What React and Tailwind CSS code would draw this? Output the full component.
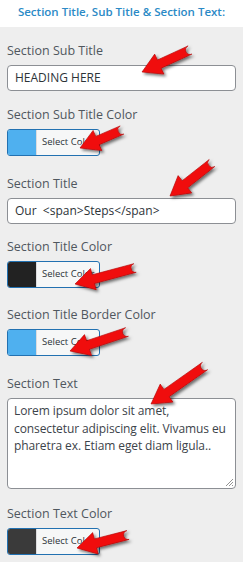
const font = { fontFamily: '"Open Sans", "Noto Sans", sans-serif' }

function Label({ children }) {
    return <div className="text-[12.5px] leading-[18px] text-[#50575e] mb-[5px]">{children}</div>
}

function TextField({ value }) {
    return (
        <div className="h-[26px] w-full rounded-[4px] border border-[#8c8f94] bg-white px-[7px] flex items-center text-[12px] text-[#2c3338] whitespace-pre">
            {value}
        </div>
    )
}

function ColorButton({ color }) {
    return (
        <div className="h-[27px] w-[93px] rounded-[3px] border border-[#2271b1] bg-[#f6f7f7] flex overflow-hidden">
            <div className="w-[28px] h-full" style={{ backgroundColor: color }} />
            <div className="flex items-center pl-[5px] text-[9.5px] text-[#2c3338] border-l border-[#dcdcde]">Select Color</div>
        </div>
    )
}

// arrows: [tailX, tailY, tipX, tipY]
const arrows = [
    [190, 50, 142, 72],
    [122, 130, 80, 148],
    [212, 163, 170, 196],
    [135, 268, 75, 284],
    [127, 332, 70, 351],
    [205, 366, 151, 404],
    [128, 535, 77, 548],
]

function arrowPath([x1, y1, x2, y2]) {
    const dx = x2 - x1
    const dy = y2 - y1
    const len = Math.hypot(dx, dy)
    const ux = dx / len
    const uy = dy / len
    const nx = -uy
    const ny = ux
    const headLen = 19
    const headW = 11
    const shaftW = 4.5
    const bx = x2 - ux * headLen
    const by = y2 - uy * headLen
    const p = (x, y) => `${x.toFixed(1)},${y.toFixed(1)}`
    return [
        `M${p(x1 + nx * shaftW, y1 + ny * shaftW)}`,
        `L${p(bx + nx * shaftW, by + ny * shaftW)}`,
        `L${p(bx + nx * headW, by + ny * headW)}`,
        `L${p(x2, y2)}`,
        `L${p(bx - nx * headW, by - ny * headW)}`,
        `L${p(bx - nx * shaftW, by - ny * shaftW)}`,
        `L${p(x1 - nx * shaftW, y1 - ny * shaftW)}`,
        `A${shaftW},${shaftW} 0 0 1 ${p(x1 + nx * shaftW, y1 + ny * shaftW)}`,
        'Z',
    ].join(' ')
}

export default function App() {
    return (
        <div className="relative w-[243px] h-[562px] bg-[#eeeeee] overflow-hidden" style={font}>
            {/* Header */}
            <div className="h-[27px] bg-white flex items-center justify-center">
                <span className="text-[11.5px] font-semibold text-[#2b8ac6] leading-none -mt-[3px]">Section Title, Sub Title &amp; Section Text:</span>
            </div>

            <div className="px-[7px] pt-[15px]">
                <Label>Section Sub Title</Label>
                <TextField value="HEADING HERE" />

                <div className="mt-[15px]">
                    <Label>Section Sub Title Color</Label>
                    <ColorButton color="#4fb0ef" />
                </div>

                <div className="mt-[19px]">
                    <Label>Section Title</Label>
                    <TextField value="Our  <span>Steps</span>" />
                </div>

                <div className="mt-[14px]">
                    <Label>Section Title Color</Label>
                    <ColorButton color="#222222" />
                </div>

                <div className="mt-[18px]">
                    <Label>Section Title Border Color</Label>
                    <ColorButton color="#4fb0ef" />
                </div>

                <div className="mt-[19px]">
                    <Label>Section Text</Label>
                    <div className="relative h-[91px] w-full rounded-[4px] border border-[#8c8f94] bg-white pl-[6px] pr-[4px] pt-[3px] text-[12px] tracking-[-0.1px] leading-[17.5px] text-[#3c434a]">
                        Lorem ipsum dolor sit amet, consectetur adipiscing elit. Vivamus eu pharetra ex. Etiam eget diam ligula..
                        <svg className="absolute right-[2px] bottom-[2px]" width="8" height="8" viewBox="0 0 8 8">
                            <path d="M8 1 L1 8 M8 4 L4 8 M8 7 L7 8" stroke="#777" strokeWidth="0.8" />
                        </svg>
                    </div>
                </div>

                <div className="mt-[16px]">
                    <Label>Section Text Color</Label>
                    <ColorButton color="#3a3a3a" />
                </div>
            </div>

            {/* Red annotation arrows */}
            <svg className="absolute inset-0 pointer-events-none" width="243" height="562">
                <defs>
                    <filter id="sh" x="-30%" y="-30%" width="160%" height="160%">
                        <feDropShadow dx="2" dy="2" stdDeviation="1.5" floodColor="#000" floodOpacity="0.55" />
                    </filter>
                </defs>
                {arrows.map((a, i) => (
                    <path key={i} d={arrowPath(a)} fill="#f01010" stroke="#b00000" strokeWidth="0.6" filter="url(#sh)" />
                ))}
            </svg>
        </div>
    )
}
